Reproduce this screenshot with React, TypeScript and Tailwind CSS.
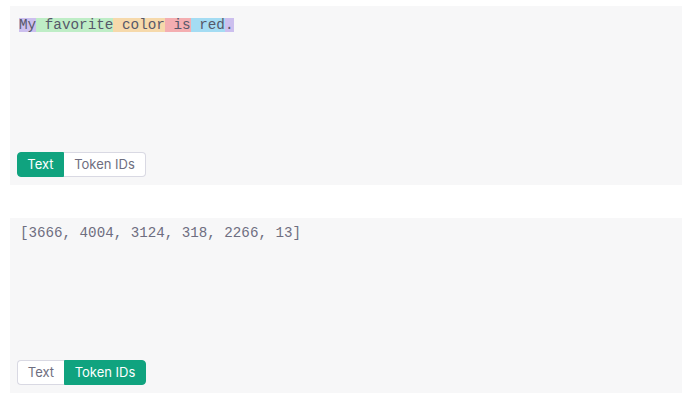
const tokens = [
  { text: "My", bg: "bg-[rgba(107,64,216,0.3)]" },
  { text: " favorite", bg: "bg-[rgba(104,222,122,0.4)]" },
  { text: " color", bg: "bg-[rgba(244,172,54,0.4)]" },
  { text: " is", bg: "bg-[rgba(239,65,70,0.4)]" },
  { text: " red", bg: "bg-[rgba(39,181,234,0.4)]" },
  { text: ".", bg: "bg-[rgba(107,64,216,0.3)]" },
];

const ids = [3666, 4004, 3124, 318, 2266, 13];

function Toggle({ active }: { active: "text" | "ids" }) {
  const on = "bg-[#10a37f] text-white border-[#10a37f]";
  const off = "bg-white text-[#6e6e80] border-[#d9d9e3]";
  return (
    <div className="flex h-[25px] font-['Inter',sans-serif] text-[13px]">
      <button
        className={`w-[47px] h-full rounded-l-[4px] border flex items-center justify-center ${
          active === "text" ? on : off
        } ${active === "ids" ? "border-r-0" : ""}`}
      >
        Text
      </button>
      <button
        className={`w-[82px] h-full rounded-r-[4px] border flex items-center justify-center ${
          active === "ids" ? on : off
        } ${active === "text" ? "border-l-0" : ""}`}
      >
        Token IDs
      </button>
    </div>
  );
}

export default function App() {
  return (
    <div className="min-h-screen bg-white pt-[6px] pl-[10px] pr-[7px] font-['Liberation_Mono',monospace]">
      <div className="bg-[#f7f7f8] pt-[12px] pb-[8px] px-[7px]">
        <div className="h-[134px] pl-[2px]">
          <div className="text-[14.3px] leading-[14px] text-[#565869] whitespace-pre">
            {tokens.map((t, i) => (
              <span key={i} className={`inline-block h-[14px] ${t.bg}`}>
                {t.text}
              </span>
            ))}
          </div>
        </div>
        <Toggle active="text" />
      </div>

      <div className="bg-[#f7f7f8] mt-[33px] pt-[8px] pb-[8px] px-[7px]">
        <div className="h-[134px] pl-[3px]">
          <div className="text-[14.2px] leading-[14px] text-[#6e6e80] whitespace-pre">
            [{ids.join(", ")}]
          </div>
        </div>
        <Toggle active="ids" />
      </div>
    </div>
  );
}
